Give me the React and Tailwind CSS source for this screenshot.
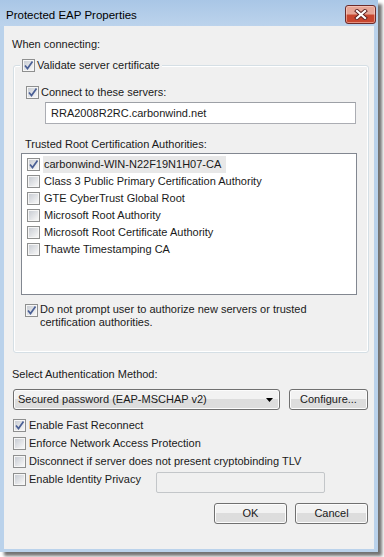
import React from "react";

const Check = ({ checked }) => (
  <span className="flex h-[13px] w-[13px] shrink-0 items-center justify-center border border-[#8e8f8f] bg-[#f6f6f6]">
    <span className="relative flex h-[9px] w-[9px] items-center justify-center bg-gradient-to-br from-[#c9cdd4] to-[#f7f7f7]">
      {checked && (
        <svg width="11" height="11" viewBox="0 0 11 11" className="absolute -left-[1px] -top-[1px]">
          <path d="M2 5.5 L4.5 8.5 L9.5 1.5" fill="none" stroke="#4a5f95" strokeWidth="1.7" />
        </svg>
      )}
    </span>
  </span>
);

const certs = [
  { name: "carbonwind-WIN-N22F19N1H07-CA", checked: true, selected: true },
  { name: "Class 3 Public Primary Certification Authority" },
  { name: "GTE CyberTrust Global Root" },
  { name: "Microsoft Root Authority" },
  { name: "Microsoft Root Certificate Authority" },
  { name: "Thawte Timestamping CA" },
];

const options = [
  { label: "Enable Fast Reconnect", checked: true },
  { label: "Enforce Network Access Protection" },
  { label: "Disconnect if server does not present cryptobinding TLV" },
];

const btn =
  "flex h-[21px] items-center rounded-[3px] border border-[#707070] bg-gradient-to-b from-[#f2f2f2] from-50% to-[#dddddd] to-50% shadow-[inset_0_0_0_1px_#fcfcfc]";

export default function App() {
  return (
    <div className="h-[557px] w-[384px] bg-white font-['Liberation_Sans',Arial,sans-serif] text-[11px] text-[#1a1a1a]">
      {/* Window */}
      <div className="flex h-[552px] w-[378px] flex-col bg-[#bad2eb] shadow-[4px_4px_3px_rgba(0,0,0,0.55)]">
        {/* Title bar */}
        <div className="flex h-[26px] shrink-0 items-start justify-between bg-gradient-to-b from-[#a9c6e6] to-[#bcd3ec]">
          <span className="ml-[6px] mt-[8px] h-[14px] text-[11.5px] leading-[14px] text-black">
            Protected EAP Properties
          </span>
          <div className="mr-[2px] mt-[5px] flex h-[19px] w-[31px] items-center justify-center rounded-[3px] border border-[#6b2b2b] bg-gradient-to-b from-[#e6a596] from-45% to-[#c8462f] to-55% shadow-[inset_0_0_0_1px_rgba(255,220,210,0.5)]">
            <svg width="14" height="11" viewBox="0 0 14 11">
              <path d="M3 2 L11 9 M11 2 L3 9" stroke="#5a2020" strokeWidth="4" strokeLinecap="square" />
              <path d="M3 2 L11 9 M11 2 L3 9" stroke="#ffffff" strokeWidth="2.2" strokeLinecap="square" />
            </svg>
          </div>
        </div>

        {/* Client area */}
        <div className="mx-[4px] mb-[3px] flex flex-1 flex-col bg-[#f0f0f0] pl-[8px] pr-[6px]">
          <div className="mt-[11px] h-[14px] leading-[14px]">When connecting:</div>

          {/* Group box */}
          <div className="ml-[1px] mt-[14px] flex h-[288px] w-[356px] flex-col rounded-[3px] border border-[#d5dfe5] shadow-[inset_0_0_0_1px_#ffffff]">
            <div className="-mt-[8px] ml-[6px] flex h-[14px] w-fit items-center gap-[2px] bg-[#f0f0f0] px-[2px]">
              <Check checked />
              <span className="leading-[14px]">Validate server certificate</span>
            </div>

            <div className="ml-[12px] mt-[14px] flex h-[13px] items-center gap-[2px]">
              <Check checked />
              <span className="leading-[13px]">Connect to these servers:</span>
            </div>

            <div className="ml-[31px] mt-[3px] flex h-[22px] w-[311px] items-center border border-[#abadb3] border-t-[#9da0a6] bg-white pl-[5px]">
              RRA2008R2RC.carbonwind.net
            </div>

            <div className="ml-[11px] mt-[13px] h-[14px] leading-[14px]">
              Trusted Root Certification Authorities:
            </div>

            <div className="ml-[7px] mt-[2px] flex h-[142px] w-[336px] flex-col border border-[#828790] bg-white pl-[5px] pt-[2px]">
              {certs.map((c) => (
                <div key={c.name} className="flex h-[17px] items-center gap-[3px]">
                  <Check checked={c.checked} />
                  <span
                    className={`flex h-[17px] items-center pl-[1px] pr-[5px] ${
                      c.selected ? "bg-[#e8e8e8]" : ""
                    }`}
                  >
                    {c.name}
                  </span>
                </div>
              ))}
            </div>

            <div className="ml-[11px] mt-[8px] flex items-start gap-[2px]">
              <span className="mt-[1px]">
                <Check checked />
              </span>
              <span className="max-w-[290px] leading-[13px]">
                Do not prompt user to authorize new servers or trusted certification authorities.
              </span>
            </div>
          </div>

          <div className="mt-[14px] h-[14px] leading-[14px]">Select Authentication Method:</div>

          <div className="ml-[1px] mt-[8px] flex h-[21px] items-center gap-[9px]">
            <div className={`${btn} w-[267px] justify-between pl-[4px] pr-[6px]`}>
              <span>Secured password (EAP-MSCHAP v2)</span>
              <svg width="7" height="4" viewBox="0 0 7 4">
                <polygon points="0,0 7,0 3.5,4" fill="#000" />
              </svg>
            </div>
            <div className={`${btn} w-[79px] justify-center`}>Configure...</div>
          </div>

          <div className="ml-[1px] mt-[6px] flex flex-col">
            {options.map((o) => (
              <div key={o.label} className="flex h-[18px] items-center gap-[3px]">
                <Check checked={o.checked} />
                <span>{o.label}</span>
              </div>
            ))}
            <div className="flex items-start">
              <div className="flex h-[18px] w-[143px] items-center gap-[3px]">
                <Check />
                <span>Enable Identity Privacy</span>
              </div>
              <div className="mt-[2px] h-[21px] w-[169px] rounded-[2px] border border-[#c3c6c9] bg-[#f0f0f0]" />
            </div>
          </div>

          <div className="mt-[10px] flex justify-end gap-[8px]">
            <div className={`${btn} w-[73px] justify-center border-[#3c7fb1] from-[#eef6fb] to-[#d5e7f3] shadow-[inset_0_0_0_1px_#9fd6f5]`}>
              OK
            </div>
            <div className={`${btn} w-[73px] justify-center`}>Cancel</div>
          </div>
        </div>
      </div>
    </div>
  );
}
